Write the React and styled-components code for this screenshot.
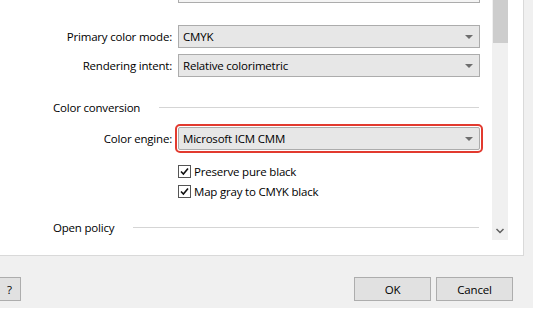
import React from 'react';
import styled, { createGlobalStyle } from 'styled-components';

const Global = createGlobalStyle`
  html, body {
    margin: 0;
    padding: 0;
    background: #fff;
  }
  body {
    font-family: 'Open Sans', 'Noto Sans', sans-serif;
    font-size: 11.5px;
    letter-spacing: -0.2px;
    color: #000;
  }
`;

const Window = styled.div`
  width: 533px;
  height: 312px;
  overflow: hidden;
  display: flex;
  flex-direction: column;
`;

const Dialog = styled.div`
  height: 308px;
  background: #f0f0f0;
  display: flex;
  flex-direction: column;
`;

const Panel = styled.div`
  width: 523px;
  height: 255px;
  background: #fff;
  border-right: 1px solid #d9d9d9;
  border-bottom: 1px solid #d9d9d9;
  display: flex;
  overflow: hidden;
`;

const Content = styled.div`
  width: 492px;
  display: flex;
  flex-direction: column;
`;

const Row = styled.div`
  display: grid;
  grid-template-columns: 172px 302px;
  column-gap: 6px;
  align-items: center;
  margin-top: ${(p) => p.$top || 0}px;
`;

const Label = styled.label`
  text-align: right;
  white-space: nowrap;
`;

const Select = styled.div`
  height: 23px;
  box-sizing: border-box;
  border: 1px solid #acacac;
  background: ${(p) => (p.$light ? '#f4f4f4' : '#e7e7e7')};
  display: flex;
  align-items: center;
  justify-content: space-between;
  padding: 0 6px 0 4px;
  border-radius: ${(p) => (p.$focus ? '2px' : '0')};
  ${(p) =>
    p.$focus &&
    `outline: 2px solid #e23a2f; outline-offset: 1px;`}
`;

const Arrow = styled.span`
  width: 0;
  height: 0;
  border-left: 4px solid transparent;
  border-right: 4px solid transparent;
  border-top: 4px solid #6e6e6e;
`;

const Heading = styled.div`
  display: flex;
  align-items: center;
  padding-left: 53px;
  width: 426px;
  height: 16px;
  margin-top: ${(p) => p.$top}px;
  white-space: nowrap;

  &::after {
    content: '';
    flex: 1;
    height: 1px;
    background: #d5d5d5;
    margin-left: ${(p) => p.$lineGap}px;
  }
`;

const Check = styled.div`
  display: flex;
  align-items: center;
  height: 20px;
  padding-left: 178px;
  gap: 3px;
  margin-top: ${(p) => p.$top || 0}px;
`;

const Box = styled.span`
  width: 13px;
  height: 13px;
  box-sizing: border-box;
  border: 1px solid #555;
  background: #fff;
  display: flex;
  align-items: center;
  justify-content: center;
`;

const Scrollbar = styled.div`
  width: 16px;
  height: 240px;
  background: #f0f0f0;
  display: flex;
  flex-direction: column;
  justify-content: space-between;
  align-items: center;
`;

const Thumb = styled.div`
  width: 15px;
  height: 43px;
  background: #cdcdcd;
`;

const Footer = styled.div`
  display: flex;
  align-items: center;
  justify-content: space-between;
  padding: 21px 20px 0 0;
`;

const Button = styled.button`
  font: inherit;
  letter-spacing: inherit;
  color: #000;
  height: 24px;
  width: ${(p) => p.$w}px;
  margin-left: ${(p) => p.$ml || 0}px;
  background: #e1e1e1;
  border: 1px solid #adadad;
  padding: 0;
`;

const Buttons = styled.div`
  display: flex;
  gap: 5px;
`;

const Tick = () => (
  <svg width="9" height="9" viewBox="0 0 9 9">
    <path d="M1 4.5 L3.4 7 L8 1.5" fill="none" stroke="#111" strokeWidth="1.6" />
  </svg>
);

export default function App() {
  return (
    <Window>
      <Global />
      <Dialog>
        <Panel>
          <Content>
            <Row style={{ marginTop: -20 }}>
              <span />
              <Select $light />
            </Row>
            <Row $top={22}>
              <Label>Primary color mode:</Label>
              <Select>
                <span>CMYK</span>
                <Arrow />
              </Select>
            </Row>
            <Row $top={6}>
              <Label>Rendering intent:</Label>
              <Select>
                <span>Relative colorimetric</span>
                <Arrow />
              </Select>
            </Row>
            <Heading $top={22} $lineGap={19}>Color conversion</Heading>
            <Row $top={12}>
              <Label>Color engine:</Label>
              <Select $focus>
                <span>Microsoft ICM CMM</span>
                <Arrow />
              </Select>
            </Row>
            <Check $top={11}>
              <Box><Tick /></Box>
              <span>Preserve pure black</span>
            </Check>
            <Check>
              <Box><Tick /></Box>
              <span>Map gray to CMYK black</span>
            </Check>
            <Heading $top={18} $lineGap={19}>Open policy</Heading>
          </Content>
          <Scrollbar>
            <Thumb />
            <svg width="10" height="8" viewBox="0 0 10 8" style={{ marginBottom: 5 }}>
              <path d="M1.5 2 L5 5.5 L8.5 2" fill="none" stroke="#606060" strokeWidth="1.5" />
            </svg>
          </Scrollbar>
        </Panel>
        <Footer>
          <Button $w={23} $ml={-2}>?</Button>
          <Buttons>
            <Button $w={77}>OK</Button>
            <Button $w={77}>Cancel</Button>
          </Buttons>
        </Footer>
      </Dialog>
    </Window>
  );
}
